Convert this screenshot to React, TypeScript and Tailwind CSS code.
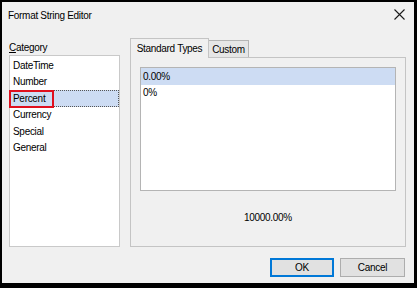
import { useState } from "react";

const CATEGORIES = ["DateTime", "Number", "Percent", "Currency", "Special", "General"];
const TYPES = ["0.00%", "0%"];

function CloseIcon() {
  return (
    <svg width="11" height="11" viewBox="0 0 11 11" className="block">
      <path d="M0.5 0.5 L10.5 10.5 M10.5 0.5 L0.5 10.5" stroke="#1a1a1a" strokeWidth="1.1" fill="none" />
    </svg>
  );
}

export default function App() {
  const [category, setCategory] = useState("Percent");
  const [type, setType] = useState("0.00%");

  return (
    <div
      className="w-[417px] h-[288px] flex flex-col bg-[#f0f0f0] border-black border-l-2 border-t-2 border-r-[3px] border-b-[5px] text-[10px] tracking-[-0.3px] text-black"
      style={{ fontFamily: '"Liberation Sans", Arial, sans-serif' }}
    >
      {/* title bar */}
      <div className="h-[25px] flex items-center justify-between pl-[6px] pr-[9px] shrink-0">
        <span className="text-[10px] pt-[1px]">Format String Editor</span>
        <CloseIcon />
      </div>

      {/* body */}
      <div className="flex gap-[10px] pl-[7px] pt-[10px]">
        <div className="w-[111px] flex flex-col">
          <div className="pt-[4px] leading-[14px]">
            <span className="underline underline-offset-1">C</span>ategory
          </div>
          <div className="h-[192px] bg-white border border-[#c9c9c9] pt-[1px]">
            {CATEGORIES.map((c) => (
              <div
                key={c}
                onClick={() => setCategory(c)}
                className={
                  c === category
                    ? "relative h-[16.5px] flex items-center pl-[2px] bg-[#cddcf3] border border-dotted border-[#555]"
                    : "h-[16.5px] flex items-center pl-[3px]"
                }
              >
                {c}
                {c === category && (
                  <div className="absolute -left-[2px] -top-[1px] w-[45px] h-[18px] border-2 border-[#e0101e]" />
                )}
              </div>
            ))}
          </div>
        </div>

        <div className="w-[276px] flex flex-col">
          <div className="flex h-[20px] items-end">
            <div className="h-[20px] w-[79px] flex items-center justify-center border border-b-0 border-[#c4c4c4] bg-[#f0f0f0] relative top-[1px] z-10">
              Standard Types
            </div>
            <div className="h-[17px] w-[40px] flex items-center justify-center border border-l-0 border-b-0 border-[#b5b5b5] bg-[#e6e6e6]">
              Custom
            </div>
          </div>
          <div className="h-[190px] border border-[#c4c4c4] flex flex-col px-[9px] pt-[9px]">
            <div className="h-[124px] bg-white border border-[#b4b4b4]">
              {TYPES.map((t) => (
                <div
                  key={t}
                  onClick={() => setType(t)}
                  className={
                    t === type
                      ? "h-[16.5px] flex items-center pl-[2px] bg-[#cddcf3]"
                      : "h-[16.5px] flex items-center pl-[2px]"
                  }
                >
                  {t}
                </div>
              ))}
            </div>
            <div className="flex-1 flex items-center justify-center pb-[2px]">10000.00%</div>
          </div>
        </div>
      </div>

      {/* buttons */}
      <div className="flex justify-end gap-[6px] pr-[9px] pt-[11px]">
        <button className="w-[64px] h-[19px] bg-[#e1e1e1] border border-[#0078d7] shadow-[inset_0_0_0_1px_#0078d7]">
          OK
        </button>
        <button className="w-[65px] h-[19px] bg-[#e1e1e1] border border-[#adadad]">Cancel</button>
      </div>
    </div>
  );
}
